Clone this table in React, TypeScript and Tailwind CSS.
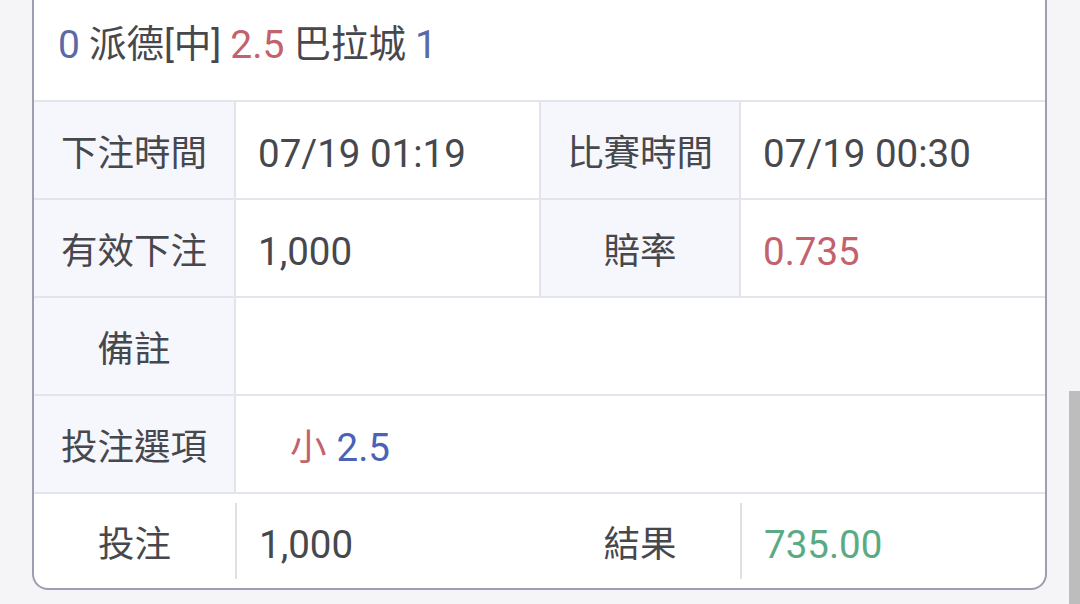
import React from "react";

const font = { fontFamily: 'Roboto, "Noto Sans CJK TC", sans-serif' };

export default function App() {
  const lbl = "flex items-center justify-center bg-[#f6f7fc] text-[#47484d] pt-[8px] text-[36.5px]";
  const val = "flex items-center pt-[8px]";
  return (
    <div className="relative h-[604px] w-[1080px] overflow-hidden bg-[#f5f5f7]" style={font}>
      <div className="ml-[32px] w-[1015px] overflow-hidden rounded-b-[16px] border-2 border-t-0 border-[#9c9eb2] bg-white text-[38.5px] leading-none text-[#47484d]">
        {/* header */}
        <div className="flex h-[102px] items-center border-b-2 border-[#e3e4ec] pb-[10px] pl-[24px] text-[39px]">
          <span className="text-[#5a6aa6]">0</span>
          <span className="ml-[9px] text-[37.5px]">派德[中]</span>
          <span className="ml-[9px] text-[#c2626d]">2.5</span>
          <span className="ml-[9px] text-[37.5px]">巴拉城</span>
          <span className="ml-[9px] text-[#5a6aa6]">1</span>
        </div>
        {/* row 1 */}
        <div className="flex h-[98px] border-b-2 border-[#e3e4ec]">
          <div className={`${lbl} w-[202px] border-r-2 border-[#e3e4ec]`}>下注時間</div>
          <div className={`${val} w-[305px] border-r-2 border-[#e3e4ec] pl-[22px]`}>07/19 01:19</div>
          <div className={`${lbl} w-[200px] border-r-2 border-[#e3e4ec]`}>比賽時間</div>
          <div className={`${val} flex-1 pl-[22px]`}>07/19 00:30</div>
        </div>
        {/* row 2 */}
        <div className="flex h-[98px] border-b-2 border-[#e3e4ec]">
          <div className={`${lbl} w-[202px] border-r-2 border-[#e3e4ec]`}>有效下注</div>
          <div className={`${val} w-[305px] border-r-2 border-[#e3e4ec] pl-[22px]`}>1,000</div>
          <div className={`${lbl} w-[200px] border-r-2 border-[#e3e4ec]`}>賠率</div>
          <div className={`${val} flex-1 pl-[22px] text-[#c2626d]`}>0.735</div>
        </div>
        {/* row 3 */}
        <div className="flex h-[98px] border-b-2 border-[#e3e4ec]">
          <div className={`${lbl} w-[202px] border-r-2 border-[#e3e4ec]`}>備註</div>
          <div className="flex-1"></div>
        </div>
        {/* row 4 */}
        <div className="flex h-[98px] border-b-2 border-[#e3e4ec]">
          <div className={`${lbl} w-[202px] border-r-2 border-[#e3e4ec]`}>投注選項</div>
          <div className={`${val} flex-1 pl-[54px]`}>
            <span className="text-[36.5px] text-[#c2626d]">小</span>
            <span className="ml-[10px] text-[#4b62b6]">2.5</span>
          </div>
        </div>
        {/* row 5 */}
        <div className="flex h-[94px] items-center">
          <div className="flex w-[201px] items-center justify-center pt-[8px] text-[36.5px]">投注</div>
          <div className="h-[76px] w-[2px] bg-[#dfe0e6]"></div>
          <div className="flex w-[303px] items-center pl-[22px] pt-[8px]">1,000</div>
          <div className="flex w-[200px] items-center justify-center pt-[8px] text-[36.5px]">結果</div>
          <div className="h-[76px] w-[2px] bg-[#dfe0e6]"></div>
          <div className="flex flex-1 items-center pl-[22px] pt-[8px] text-[#5aab84]">735.00</div>
        </div>
      </div>
      <div className="absolute right-0 top-[391px] h-[213px] w-[11px] bg-[#bdbdbd]"></div>
    </div>
  );
}
